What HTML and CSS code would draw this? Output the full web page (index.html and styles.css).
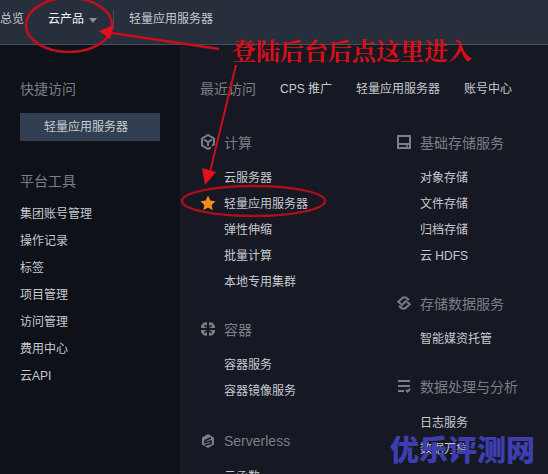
FILE: index.html
```html
<!DOCTYPE html>
<html lang="zh">
<head>
<meta charset="utf-8">
<title>云产品</title>
<link rel="stylesheet" href="styles.css">
</head>
<body>
<div class="page">
  <header class="topbar">
    <a class="top-item">总览</a>
    <a class="top-item top-active">云产品<span class="caret"></span></a>
    <span class="top-divider"></span>
    <a class="top-item">轻量应用服务器</a>
  </header>
  <div class="body">
    <aside class="side">
      <h3 class="side-title">快捷访问</h3>
      <a class="quick">轻量应用服务器</a>
      <h3 class="side-title side-title-2">平台工具</h3>
      <ul class="side-list">
        <li>集团账号管理</li><li>操作记录</li><li>标签</li><li>项目管理</li><li>访问管理</li><li>费用中心</li><li>云API</li>
      </ul>
    </aside>
    <main class="main">
      <nav class="tabs">
        <span class="tab-first">最近访问</span><span>CPS 推广</span><span>轻量应用服务器</span><span>账号中心</span>
      </nav>
      <div class="cols">
        <div class="col col-a">
          <section class="sec">
            <h4 class="sec-title">
              <svg class="ico" viewBox="0 0 16 16"><path d="M11 13.400 8 15 2 11.500v-7L8 1l6 3.500v6l-2 1.200" fill="none" stroke="currentColor" stroke-width="2"/><path d="M4 5.500 8 8l4-2.500M8 8v4" fill="none" stroke="currentColor" stroke-width="2"/></svg>
              计算</h4>
            <a class="link">云服务器</a>
            <a class="link link-star"><svg class="star" viewBox="0 0 16 16"><path d="M8 .6l2.300 4.900 5.300.7-3.900 3.700 1 5.300L8 12.600l-4.700 2.600 1-5.300L.4 6.200l5.300-.7z" fill="#f58a1f"/></svg>轻量应用服务器</a>
            <a class="link">弹性伸缩</a>
            <a class="link">批量计算</a>
            <a class="link">本地专用集群</a>
          </section>
          <section class="sec">
            <h4 class="sec-title">
              <svg class="ico" viewBox="0 0 16 16"><path d="M7 1v6H1V5l2-3zM9 1l4 1 2 3v2H9zM1 9h6v6l-4-1-2-3zM9 9h6v2l-2 3-4 1z" fill="currentColor"/><path d="M4.500 4.500 7 6M11.500 4.500 9 6M4.500 11.500 7 10M11.500 11.500 9 10" stroke="#161923" stroke-width="1.500"/></svg>
              容器</h4>
            <a class="link">容器服务</a>
            <a class="link">容器镜像服务</a>
          </section>
          <section class="sec sec-shift">
            <h4 class="sec-title sec-latin">
              <svg class="ico" viewBox="0 0 16 16"><path d="M8 1 14 4.500v7L8 15l-6-3.500v-7z" fill="currentColor"/><path d="M11 4.800 5 7.500v2.200l6-1.700v2.600L5 12.200" fill="none" stroke="#161923" stroke-width="1.500"/></svg>
              Serverless</h4>
            <a class="link">云函数</a>
          </section>
        </div>
        <div class="col col-b">
          <section class="sec">
            <h4 class="sec-title">
              <svg class="ico" viewBox="0 0 16 16"><rect x="2" y="2" width="12" height="12" fill="none" stroke="currentColor" stroke-width="2"/><path d="M2 10h12" stroke="currentColor" stroke-width="2"/><path d="M10 12h2" stroke="currentColor" stroke-width="1.500"/></svg>
              基础存储服务</h4>
            <a class="link">对象存储</a>
            <a class="link">文件存储</a>
            <a class="link">归档存储</a>
            <a class="link">云 HDFS</a>
          </section>
          <section class="sec">
            <h4 class="sec-title">
              <svg class="ico" viewBox="0 0 16 16"><path d="M13 5 10 2.500H7L2.300 6.800 5 9M3 11l3 2.500h3l4.700-4.300L11 7M11 5.300 5 10.700" fill="none" stroke="currentColor" stroke-width="2"/></svg>
              存储数据服务</h4>
            <a class="link">智能媒资托管</a>
          </section>
          <section class="sec sec-data">
            <h4 class="sec-title">
              <svg class="ico" viewBox="0 0 16 16"><path d="M2 3h12M2 8h12M2 13h6M10 12l1.500 1.500L14 11" fill="none" stroke="currentColor" stroke-width="2"/></svg>
              数据处理与分析</h4>
            <a class="link">日志服务</a>
            <a class="link">数据万象</a>
          </section>
        </div>
      </div>
    </main>
  </div>

  <svg class="marks" viewBox="0 0 548 474" aria-hidden="true">
    <ellipse cx="69" cy="25" rx="43" ry="27" fill="none" stroke="#c0101c" stroke-width="2.500"/>
    <path d="M219 49 112 33" stroke="#c80f1a" stroke-width="2.500" fill="none"/>
    <path d="M99 31 114 25 110 39z" fill="#e0101c"/>
    <path d="M236 65 210 172" stroke="#c80f1a" stroke-width="2" fill="none"/>
    <path d="M205 185 202 168 216 172z" fill="#e0101c"/>
    <ellipse cx="253.500" cy="201" rx="71.500" ry="15" fill="none" stroke="#a90f1c" stroke-width="2.500"/>
  </svg>
  <div class="callout">登陆后台后点这里进入</div>
  <div class="watermark">优乐评测网</div>
</div>
</body>
</html>
```
FILE: styles.css
```css
* { box-sizing: border-box; }
html, body { margin: 0; padding: 0; background: #161923; }
body { font-family: "Liberation Sans", "Noto Sans CJK SC", sans-serif; font-size: 12px; color: #c6c9ce; }
.page { position: relative; width: 548px; height: 474px; overflow: hidden; display: flex; flex-direction: column; }

.topbar { flex: 0 0 45px; display: flex; align-items: center; padding: 0 0 6px 0; background: #272f3d; border-bottom: 1px solid #4a505b; }
.top-item { color: #c6c9ce; line-height: 20px; }
.top-active { color: #f2f3f5; margin-left: 24px; display: flex; align-items: center; }
.caret { width: 0; height: 0; margin-left: 5px; margin-top: 2px; border-left: 4px solid transparent; border-right: 4px solid transparent; border-top: 5px solid #8b9099; }
.top-divider { width: 1px; height: 18px; background: #474e5a; margin: 0 15px 0 16px; }

.body { flex: 1; display: flex; min-height: 0; }
.side { flex: 0 0 180px; background: #0f1118; padding: 34px 20px 0; }
.side-title { margin: 0; font-size: 14px; font-weight: 400; line-height: 20px; color: #7b7e85; }
.side-title-2 { margin-top: 30px; }
.quick { display: block; height: 28px; margin-top: 14px; padding-right: 8px; line-height: 28px; text-align: center; background: #323e51; color: #c9ccd1; }
.side-list { list-style: none; margin: 10px 0 0; padding: 0; }
.side-list li { height: 27px; line-height: 27px; }

.main { flex: 1; padding: 34px 0 0 20px; min-width: 0; }
.tabs { display: flex; gap: 24px; height: 20px; line-height: 20px; }
.tab-first { font-size: 14px; color: #7b7e85; }
.cols { display: flex; margin-top: 30px; }
.col-a { flex: 0 0 196px; }
.col-b { flex: 1; }
.sec { margin-bottom: 21px; }
.sec-shift { margin-top: 24px; }
.sec-title { display: flex; align-items: center; gap: 8px; height: 26px; margin: 0 0 10px; font-size: 14px; font-weight: 400; color: #7b7e85; }
.sec-data .sec-title { margin-bottom: 11px; }
.ico { width: 16px; height: 16px; flex: none; color: #7b7e85; }
.link { position: relative; display: block; height: 26px; line-height: 26px; padding-left: 24px; }
.star { position: absolute; left: 0; top: 4px; width: 16px; height: 16px; }

.marks { position: absolute; left: 0; top: 0; width: 548px; height: 474px; pointer-events: none; }
.callout { position: absolute; left: 232px; top: 36px; font-size: 24px; line-height: 28px; font-weight: 700; color: #d90f18; white-space: nowrap; font-family: "Noto Serif CJK SC", "Noto Sans CJK SC", sans-serif; }
.watermark { position: absolute; left: 390px; top: 428px; font-size: 29px; line-height: 40px; font-weight: 900; color: #3e3eb0; white-space: nowrap; font-family: "Noto Sans CJK SC", sans-serif; }
```
